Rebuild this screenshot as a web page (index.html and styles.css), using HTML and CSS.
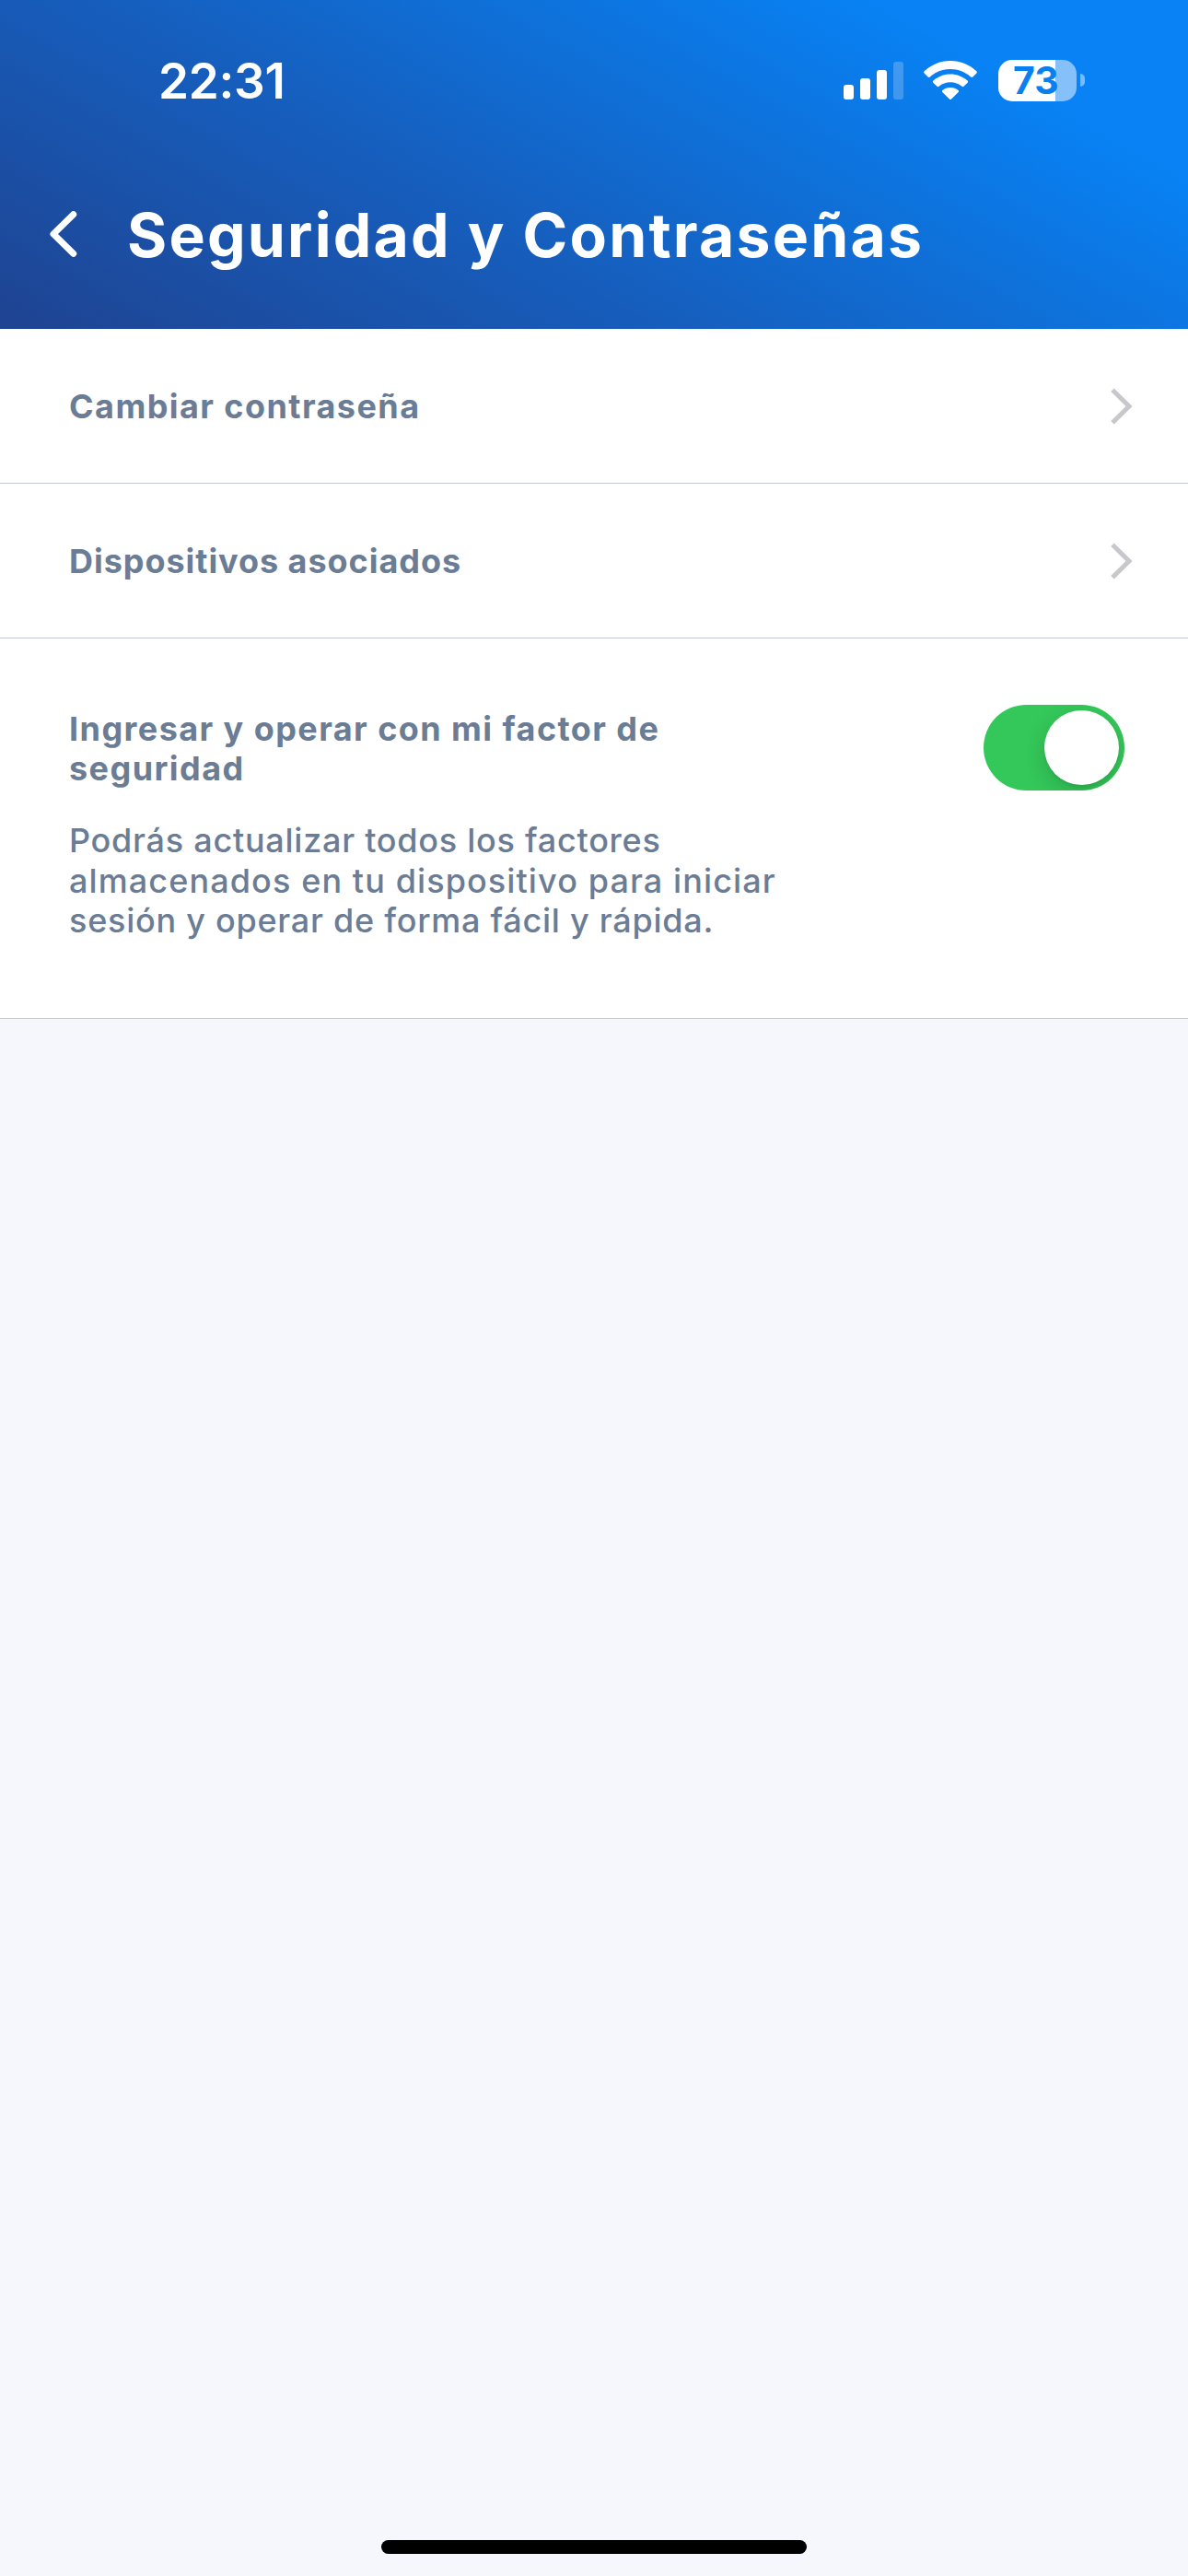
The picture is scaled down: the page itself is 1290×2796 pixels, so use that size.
FILE: index.html
```html
<!DOCTYPE html>
<html lang="es">
<head>
  <meta charset="UTF-8" />
  <meta name="viewport" content="width=device-width, initial-scale=1.0"/>
  <title>Seguridad y Contraseñas</title>
  <link rel="stylesheet" href="styles.css">
</head>
<body>
  <header class="header">
    <div class="status-bar">
      <span class="time">22:31</span>
      <div class="status-icons">
        <svg class="signal" viewBox="0 0 65 41" width="65" height="41" fill="#fff">
          <rect x="0" y="25" width="11" height="16" rx="3"/>
          <rect x="18" y="18" width="11" height="23" rx="3"/>
          <rect x="36" y="9" width="11" height="32" rx="3"/>
          <rect x="54" y="0" width="11" height="41" rx="3" opacity="0.22"/>
        </svg>
        <svg class="wifi" viewBox="0 0 58 42" width="58" height="42" fill="#fff">
          <path d="M29 0C18 0 8 4.300 0.700 11.300C0 12 0 12.900 0.600 13.500L4.700 17.500C5.400 18.100 6.200 18.100 6.900 17.500C12.700 12.200 20.500 9 29 9S45.300 12.200 51.100 17.500C51.800 18.100 52.600 18.100 53.300 17.500L57.400 13.500C58 12.900 58 12 57.300 11.300C50 4.300 40 0 29 0Z"/>
          <path d="M29 14.500C21.800 14.500 15.300 17.200 10.400 21.600C9.700 22.200 9.700 23 10.300 23.700L14.500 27.800C15.200 28.400 15.900 28.400 16.600 27.800C19.900 25 24.300 23.300 29 23.300S38.100 25 41.400 27.800C42.100 28.400 42.800 28.400 43.500 27.800L47.700 23.700C48.300 23 48.300 22.200 47.600 21.600C42.700 17.200 36.200 14.500 29 14.500Z"/>
          <path d="M29 29C25.800 29 22.700 30.100 20.400 31.900C19.700 32.500 19.700 33.300 20.300 33.900L27.900 41.400C28.600 42.100 29.400 42.100 30.100 41.400L37.700 33.900C38.300 33.300 38.300 32.500 37.600 31.900C35.300 30.100 32.200 29 29 29Z"/>
        </svg>
        <div class="battery">
          <div class="battery-body">73</div>
          <div class="battery-cap"></div>
        </div>
      </div>
    </div>
    <div class="title-bar">
      <svg class="back" viewBox="0 0 30 50" width="30" height="50">
        <path d="M25.700 3.700L4 25L25.700 46.300" fill="none" stroke="#fff" stroke-width="7" stroke-linecap="round" stroke-linejoin="round"/>
      </svg>
      <h1>Seguridad y Contraseñas</h1>
    </div>
  </header>

  <main class="list">
    <div class="row">
      <span class="label">Cambiar contraseña</span>
      <svg class="arrow" viewBox="0 0 24 40" width="24" height="40">
        <path d="M2 2.300L20 20L2 37.700" fill="none" stroke="#c7c7cc" stroke-width="5"/>
      </svg>
    </div>
    <div class="row">
      <span class="label narrow">Dispositivos asociados</span>
      <svg class="arrow" viewBox="0 0 24 40" width="24" height="40">
        <path d="M2 2.300L20 20L2 37.700" fill="none" stroke="#c7c7cc" stroke-width="5"/>
      </svg>
    </div>
    <div class="row-switch">
      <div class="text">
        <h2 class="label">Ingresar y operar con mi factor de<br>seguridad</h2>
        <p>Podrás actualizar todos los factores<br><span class="wide">almacenados en tu dispositivo para iniciar</span><br>sesión y operar de forma fácil y rápida.</p>
      </div>
      <div class="switch"><div class="knob"></div></div>
    </div>
  </main>

  <div class="home-indicator"></div>
</body>
</html>
```
FILE: styles.css
```css
* {
  box-sizing: border-box;
}

body {
  margin: 0;
  height: 2796px;
  display: flex;
  flex-direction: column;
  font-family: Inter, "Liberation Sans", sans-serif;
  background-color: #f5f7fc;
  color: #6b7c95;
}

h1, h2, p {
  margin: 0;
}

svg {
  display: block;
}

.header {
  height: 357px;
  background: linear-gradient(29.4deg, #1f4391 0%, #165ebd 38.5%, #0882f4 82%);
  color: #fff;
}

.status-bar {
  height: 174px;
  padding: 0 112px 0 172px;
  display: flex;
  justify-content: space-between;
  align-items: center;
}

.time {
  font-size: 53px;
  font-weight: 600;
  letter-spacing: -0.3px;
  padding-top: 1px;
}

.status-icons {
  display: flex;
  align-items: center;
}

.wifi {
  margin: 0 23px 0 22px;
}

.battery {
  display: flex;
  align-items: center;
  gap: 4px;
}

.battery-body {
  width: 85px;
  height: 45px;
  border-radius: 15px;
  background: linear-gradient(to right, #fff 62px, #85c0fa 62px);
  color: #0a80f0;
  font-size: 41px;
  font-weight: 700;
  line-height: 45px;
  padding-left: 16px;
}

.battery-cap {
  width: 5px;
  height: 14px;
  border-radius: 0 5px 5px 0;
  background: #7bbaf8;
}

.title-bar {
  display: flex;
  align-items: center;
  height: 160px;
  padding-left: 54px;
  gap: 54px;
}

h1 {
  padding-top: 2px;
  font-size: 66px;
  font-weight: 700;
  line-height: 80px;
  letter-spacing: 2.2px;
  white-space: nowrap;
}

.list {
  background: #fff;
}

.row {
  height: 168px;
  padding: 1px 60px 0 75px;
  display: flex;
  justify-content: space-between;
  align-items: center;
  border-bottom: 1px solid #c3cad7;
}

.label {
  font-size: 36px;
  font-weight: 700;
  line-height: 43px;
  letter-spacing: 1.43px;
  white-space: nowrap;
}

.narrow {
  letter-spacing: 0.95px;
}

.row-switch {
  height: 413px;
  padding: 72px 69px 0 75px;
  display: flex;
  justify-content: space-between;
  align-items: flex-start;
  border-bottom: 1px solid #c3ccd6;
}

.text {
  padding-top: 5px;
}

p {
  margin-top: 35px;
  font-size: 36px;
  font-weight: 450;
  line-height: 43.5px;
  letter-spacing: 0.74px;
  white-space: nowrap;
}

.wide {
  letter-spacing: 1.1px;
}

.switch {
  width: 153px;
  height: 93px;
  padding: 6px;
  border-radius: 47px;
  background: #34c759;
  display: flex;
  justify-content: flex-end;
  overflow: hidden;
}

.knob {
  width: 81px;
  height: 81px;
  border-radius: 50%;
  background: #fff;
  box-shadow: 0 9px 24px rgba(0, 0, 0, 0.15), 0 3px 3px rgba(0, 0, 0, 0.06);
}

.home-indicator {
  width: 462px;
  height: 15px;
  margin: auto auto 24px;
  border-radius: 8px;
  background: #000;
}
```
